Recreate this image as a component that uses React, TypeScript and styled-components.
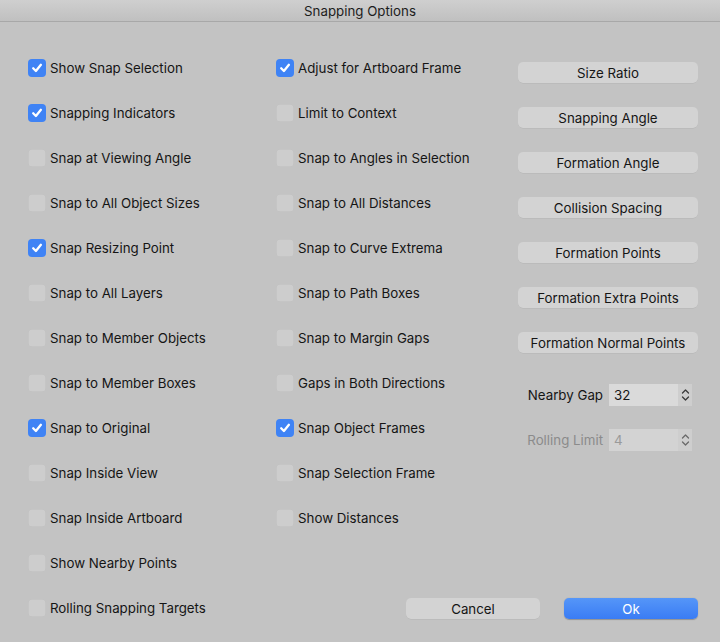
import React, { useState } from 'react';
import styled, { createGlobalStyle } from 'styled-components';

const GlobalStyle = createGlobalStyle`
    html, body {
        margin: 0;
        padding: 0;
        background: #c3c3c3;
    }
    body {
        font-family: Inter, "Noto Sans", "Liberation Sans", sans-serif;
        font-size: 13.3px;
        color: #151515;
    }
`;

const Window = styled.div`
    width: 720px;
    height: 642px;
    display: flex;
    flex-direction: column;
    background: #c3c3c3;
    overflow: hidden;
`;

const TitleBar = styled.div`
    height: 22px;
    flex: none;
    display: flex;
    align-items: center;
    justify-content: center;
    background: linear-gradient(#cfcfcf, #c0c0c0);
    border-bottom: 1px solid #a8a8a8;
    box-sizing: border-box;
    font-size: 13.3px;
    color: #1d1d1d;
`;

const Body = styled.div`
    flex: 1;
    display: flex;
    padding: 23px 22px 0 28px;
`;

const CheckColumn = styled.div<{ width: number }>`
    width: ${(p) => p.width}px;
    flex: none;
    display: flex;
    flex-direction: column;
`;

const RightArea = styled.div`
    flex: 1;
    display: flex;
    flex-direction: column;
`;

const TopRow = styled.div`
    display: flex;
    flex: 1;
`;

const Row = styled.label`
    height: 45px;
    display: flex;
    align-items: center;
    gap: 4px;
    cursor: default;
    white-space: nowrap;
`;

const Box = styled.span<{ checked: boolean }>`
    width: 18px;
    height: 18px;
    border-radius: 4px;
    flex: none;
    display: flex;
    align-items: center;
    justify-content: center;
    box-sizing: border-box;
    background: ${(p) => (p.checked ? '#3f83f5' : '#cdcdcd')};
    box-shadow: ${(p) => (p.checked ? 'none' : 'inset 0 0 0 0.5px #bdbdbd')};
`;

const ActionColumn = styled.div`
    width: 180px;
    flex: none;
    display: flex;
    flex-direction: column;
    padding-top: 5px;
`;

const ActionSlot = styled.div`
    height: 45px;
    display: flex;
    align-items: center;
`;

const PushButton = styled.button<{ primary?: boolean }>`
    width: 100%;
    height: 21px;
    border: none;
    border-radius: 5px;
    font-family: inherit;
    font-size: 13.3px;
    padding: 0;
    color: ${(p) => (p.primary ? '#fff' : '#151515')};
    background: ${(p) => (p.primary ? 'linear-gradient(#5596f8, #3a7cf4)' : '#d3d3d3')};
    box-shadow: ${(p) => (p.primary ? '0 0.5px 1px rgba(0,0,0,0.25)' : '0 0.5px 0.5px rgba(0,0,0,0.08)')};
`;

const FieldRow = styled.div<{ disabled?: boolean }>`
    height: 45px;
    display: flex;
    align-items: center;
    justify-content: flex-end;
    gap: 6px;
    color: ${(p) => (p.disabled ? '#8b8b8b' : '#151515')};
`;

const FieldSection = styled.div`
    margin-top: 7px;
    padding-right: 6px;
`;

const Field = styled.div<{ disabled?: boolean }>`
    width: 83px;
    height: 22px;
    display: flex;
    align-items: stretch;
    background: ${(p) => (p.disabled ? '#d3d3d3' : '#dadada')};
    box-sizing: border-box;
`;

const FieldValue = styled.span<{ disabled?: boolean }>`
    flex: 1;
    display: flex;
    align-items: center;
    padding-left: 5px;
    color: ${(p) => (p.disabled ? '#9a9a9a' : '#151515')};
`;

const Stepper = styled.span`
    width: 14px;
    display: flex;
    align-items: center;
    justify-content: center;
    background: #cecece;
`;

const Footer = styled.div`
    height: 45px;
    display: flex;
    align-items: center;
    justify-content: flex-end;
    gap: 24px;
    margin-bottom: 11px;
`;

const FooterButton = styled.div`
    width: 134px;
`;

const Check = () => (
    <svg width="12" height="12" viewBox="0 0 12 12">
        <path d="M2.2 6.3 L4.9 9 L9.9 2.8" fill="none" stroke="#fff" strokeWidth="2.3" strokeLinecap="round" strokeLinejoin="round" />
    </svg>
);

const StepIcon = ({ color }: { color: string }) => (
    <svg width="9" height="14" viewBox="0 0 9 14">
        <path d="M1.5 5 L4.5 2 L7.5 5 M1.5 9 L4.5 12 L7.5 9" fill="none" stroke={color} strokeWidth="1.3" strokeLinecap="round" strokeLinejoin="round" />
    </svg>
);

interface IOption {
    label: string;
    checked: boolean;
}

const leftOptions: IOption[] = [
    { label: 'Show Snap Selection', checked: true },
    { label: 'Snapping Indicators', checked: true },
    { label: 'Snap at Viewing Angle', checked: false },
    { label: 'Snap to All Object Sizes', checked: false },
    { label: 'Snap Resizing Point', checked: true },
    { label: 'Snap to All Layers', checked: false },
    { label: 'Snap to Member Objects', checked: false },
    { label: 'Snap to Member Boxes', checked: false },
    { label: 'Snap to Original', checked: true },
    { label: 'Snap Inside View', checked: false },
    { label: 'Snap Inside Artboard', checked: false },
    { label: 'Show Nearby Points', checked: false },
    { label: 'Rolling Snapping Targets', checked: false },
];

const middleOptions: IOption[] = [
    { label: 'Adjust for Artboard Frame', checked: true },
    { label: 'Limit to Context', checked: false },
    { label: 'Snap to Angles in Selection', checked: false },
    { label: 'Snap to All Distances', checked: false },
    { label: 'Snap to Curve Extrema', checked: false },
    { label: 'Snap to Path Boxes', checked: false },
    { label: 'Snap to Margin Gaps', checked: false },
    { label: 'Gaps in Both Directions', checked: false },
    { label: 'Snap Object Frames', checked: true },
    { label: 'Snap Selection Frame', checked: false },
    { label: 'Show Distances', checked: false },
];

const actions = [
    'Size Ratio',
    'Snapping Angle',
    'Formation Angle',
    'Collision Spacing',
    'Formation Points',
    'Formation Extra Points',
    'Formation Normal Points',
];

const OptionList = ({ options, width }: { options: IOption[]; width: number }) => {
    const [state, setState] = useState(options.map((o) => o.checked));
    const toggle = (i: number) => setState((s) => s.map((v, j) => (j === i ? !v : v)));
    return (
        <CheckColumn width={width}>
            {options.map((o, i) => (
                <Row key={o.label} onClick={() => toggle(i)}>
                    <Box checked={state[i]}>{state[i] && <Check />}</Box>
                    {o.label}
                </Row>
            ))}
        </CheckColumn>
    );
};

export default function App() {
    return (
        <>
            <GlobalStyle />
            <Window>
                <TitleBar>Snapping Options</TitleBar>
                <Body>
                    <OptionList options={leftOptions} width={248} />
                    <RightArea>
                        <TopRow>
                            <OptionList options={middleOptions} width={242} />
                            <ActionColumn>
                                {actions.map((a) => (
                                    <ActionSlot key={a}>
                                        <PushButton>{a}</PushButton>
                                    </ActionSlot>
                                ))}
                                <FieldSection>
                                    <FieldRow>
                                        Nearby Gap
                                        <Field>
                                            <FieldValue>32</FieldValue>
                                            <Stepper><StepIcon color="#3a3a3a" /></Stepper>
                                        </Field>
                                    </FieldRow>
                                    <FieldRow disabled>
                                        Rolling Limit
                                        <Field disabled>
                                            <FieldValue disabled>4</FieldValue>
                                            <Stepper><StepIcon color="#6a6a6a" /></Stepper>
                                        </Field>
                                    </FieldRow>
                                </FieldSection>
                            </ActionColumn>
                        </TopRow>
                        <Footer>
                            <FooterButton><PushButton>Cancel</PushButton></FooterButton>
                            <FooterButton><PushButton primary>Ok</PushButton></FooterButton>
                        </Footer>
                    </RightArea>
                </Body>
            </Window>
        </>
    );
}
